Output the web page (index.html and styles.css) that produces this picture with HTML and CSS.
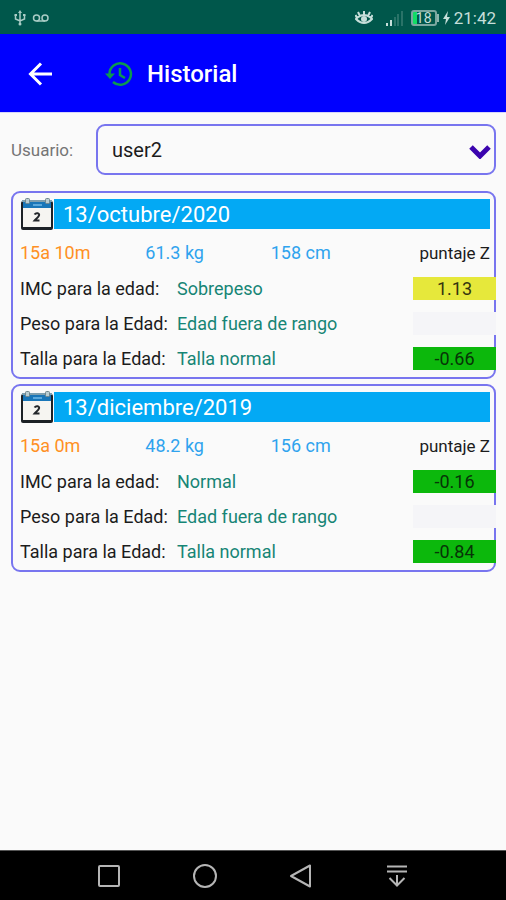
FILE: index.html
```html
<!DOCTYPE html>
<html lang="es">
<head>
<meta charset="utf-8">
<meta name="viewport" content="width=device-width, initial-scale=1">
<title>Historial</title>
<link rel="stylesheet" href="styles.css">
</head>
<body>
<svg class="sprite" aria-hidden="true">
  <symbol id="calendar" viewBox="0 0 34 34">
    <rect x="1" y="4" width="32" height="29" rx="2" fill="#1c2126"/>
    <rect x="3" y="5" width="28" height="7" fill="#1976b8"/>
    <rect x="13" y="7" width="9" height="2" fill="#5ba9dc"/>
    <rect x="3" y="11" width="28" height="19" fill="#f6f5f1"/>
    <path d="M2 4H32" stroke="#7f9fae" stroke-width="2"/>
    <g fill="#b9cdd2" stroke="#71868c"><rect x="5.500" y="1.500" width="4" height="5" rx="1"/><rect x="25.500" y="1.500" width="4" height="5" rx="1"/></g>
    <path d="M14.500 17.500C16 15.500 20 16 19 18.500C18.500 20.500 16 21.500 14.500 23.500H19.500" fill="none" stroke="#22262a" stroke-width="2"/>
  </symbol>
</svg>

<div class="status">
  <svg width="12" height="18" viewBox="0 0 12 18" fill="none" stroke="#a9ccc5" stroke-width="1.500"><path d="M6 3V15M1.500 6V10L6 12L10.500 10V6"/><path d="M6 1L8 4H4ZM0.500 5H3V7H0.500ZM9 5H11.500V7H9Z" fill="#a9ccc5" stroke="none"/><circle cx="6" cy="15" r="1.500" fill="#a9ccc5" stroke="none"/></svg>
  <svg class="voicemail" width="18" height="10" viewBox="0 0 18 10" fill="none" stroke="#a9ccc5" stroke-width="1.500"><circle cx="4.500" cy="5" r="3"/><circle cx="13" cy="5" r="3"/><path d="M4.500 8H13"/></svg>
  <div class="status-right">
    <svg width="18" height="16" viewBox="0 0 18 16" fill="none" stroke="#c6dfda" stroke-width="2"><path d="M1 9Q9 1 17 9Q9 17 1 9ZM9 5V1M5 6L3 2M13 6L15 2M2 8L0.500 5M16 8L17.500 5"/><circle cx="9" cy="9" r="3" fill="#c6dfda" stroke="none"/></svg>
    <svg class="signal" width="17" height="16" viewBox="0 0 17 16"><path d="M0 13H2V16H0ZM4 10H6V16H4Z" fill="#c6dfda"/><path d="M8 7H10V16H8ZM11 4H13V16H11ZM15 1H17V16H15Z" fill="#2a7368"/></svg>
    <span class="battery">18</span>
    <svg class="bolt" width="7" height="14" viewBox="0 0 7 14"><path d="M5 0L0 8H3L2 14L7 6H4Z" fill="#c6dfda"/></svg>
    <span class="clock">21:42</span>
  </div>
</div>

<header class="appbar">
  <button class="back" type="button" aria-label="Volver"><svg width="24" height="24" viewBox="0 0 24 24" fill="none" stroke="#fff" stroke-width="3"><path d="M24 12H3M13 1.500L2.500 12L13 22.500"/></svg></button>
  <svg class="history" width="28" height="26" viewBox="0 0 28 26" fill="none" stroke="#0c9a4e" stroke-width="2.500"><path d="M4.500 13A10.700 10.700 0 1 1 8 21"/><path d="M15 7V14L20 17" stroke-width="2.500"/><path d="M0 12.500H10L5 18Z" fill="#0c9a4e" stroke="none"/></svg>
  <h1>Historial</h1>
</header>

<main>
  <div class="picker">
    <label for="user">Usuario:</label>
    <div class="select">
      <select id="user"><option>user2</option></select>
      <svg class="chevron" width="22" height="14" viewBox="0 0 22 14" fill="none" stroke="#3b04ae" stroke-width="5"><path d="M2 2L11 11L20 2"/></svg>
    </div>
  </div>

  <article class="card">
    <div class="date"><svg width="34" height="34"><use href="#calendar"/></svg><h2>13/octubre/2020</h2></div>
    <div class="stats"><span class="age">15a 10m</span><span>61.3 kg</span><span>158 cm</span><span class="score">puntaje Z</span></div>
    <table>
      <tr><th scope="row">IMC para la edad:</th><td>Sobrepeso</td><td class="z"><span class="chip warn">1.13</span></td></tr>
      <tr><th scope="row">Peso para la Edad:</th><td>Edad fuera de rango</td><td class="z"><span class="chip"></span></td></tr>
      <tr><th scope="row">Talla para la Edad:</th><td>Talla normal</td><td class="z"><span class="chip ok">-0.66</span></td></tr>
    </table>
  </article>

  <article class="card">
    <div class="date"><svg width="34" height="34"><use href="#calendar"/></svg><h2>13/diciembre/2019</h2></div>
    <div class="stats"><span class="age">15a 0m</span><span>48.2 kg</span><span>156 cm</span><span class="score">puntaje Z</span></div>
    <table>
      <tr><th scope="row">IMC para la edad:</th><td>Normal</td><td class="z"><span class="chip ok">-0.16</span></td></tr>
      <tr><th scope="row">Peso para la Edad:</th><td>Edad fuera de rango</td><td class="z"><span class="chip"></span></td></tr>
      <tr><th scope="row">Talla para la Edad:</th><td>Talla normal</td><td class="z"><span class="chip ok">-0.84</span></td></tr>
    </table>
  </article>
</main>

<nav class="navbar">
  <button type="button" aria-label="Recientes"><svg width="24" height="24" viewBox="0 0 24 24"><rect x="2" y="2" width="20" height="20" rx="1"/></svg></button>
  <button type="button" aria-label="Inicio"><svg width="24" height="24" viewBox="0 0 24 24"><circle cx="12" cy="12" r="11"/></svg></button>
  <button type="button" aria-label="Atrás"><svg width="24" height="24" viewBox="0 0 24 24"><path d="M21 1.500V22.500L2 12Z" stroke-linejoin="round"/></svg></button>
  <button type="button" aria-label="Ocultar barra"><svg width="24" height="24" viewBox="0 0 24 24"><path d="M2 2.500H22M2 7.500H22M12 11V21M4.500 14L12 21.500L19.500 14"/></svg></button>
</nav>
</body>
</html>
```
FILE: styles.css
```css
* { box-sizing: border-box; }
body {
  margin: 0;
  min-height: 100vh;
  display: flex;
  flex-direction: column;
  background: #fafafa;
  color: #1c1c1c;
  font-family: Roboto, "Liberation Sans", sans-serif;
  font-size: 18px;
}
h1, h2 { margin: 0; }
button { padding: 0; border: 0; background: none; }
svg { display: block; flex: none; }
.sprite { position: absolute; width: 0; height: 0; }

.status {
  display: flex;
  align-items: center;
  height: 34px;
  padding: 2px 10px 0 14px;
  background: #00574b;
  color: #c6dfda;
}
.voicemail { margin-left: 6px; }
.status-right { display: flex; align-items: center; margin-left: auto; }
.signal { margin: 0 8px 0 13px; }
.battery {
  position: relative;
  width: 26px;
  height: 16px;
  border: 2px solid #7ba79f;
  border-radius: 3px;
  background: linear-gradient(90deg, #12dc65 4px, transparent 4px);
  font-size: 14px;
  line-height: 13px;
  text-align: center;
}
.battery::after {
  content: "";
  position: absolute;
  right: -4px;
  top: 2px;
  width: 2px;
  height: 8px;
  background: #8fb5ad;
}
.bolt { margin: 0 4px 0 6px; }
.clock { font-size: 17px; line-height: 20px; }

.appbar {
  display: flex;
  align-items: center;
  height: 79px;
  padding: 2px 28px 0;
  border-bottom: 1px solid #d5d5fb;
  background: #0000ff;
  color: #fff;
}
.history { margin: 0 14px 0 53px; }
h1 { font-size: 24px; line-height: 32px; font-weight: 500; }

main { flex: 1; padding: 11px 10px 0 11px; }
.picker { display: flex; align-items: center; margin-bottom: 16px; }
label { width: 85px; flex: none; color: #757575; font-size: 17px; }
.select { position: relative; flex: 1; }
select {
  display: block;
  width: 100%;
  height: 51px;
  padding: 0 40px 0 14px;
  border: 2px solid #7875ef;
  border-radius: 9px;
  background: #fafafa;
  color: #1c1c1c;
  font: inherit;
  font-size: 20px;
  appearance: none;
}
.chevron { position: absolute; right: 5px; top: 21px; pointer-events: none; }

.card {
  margin-bottom: 5px;
  padding: 4px 4px 1px 7px;
  border: 2px solid #7875ef;
  border-radius: 9px;
}
.date { display: flex; align-items: center; height: 34px; }
.date h2 {
  flex: 1;
  height: 30px;
  padding-left: 9px;
  background: #03a9f4;
  color: #fff;
  font-size: 22px;
  line-height: 31px;
  font-weight: 400;
}
.stats {
  display: grid;
  grid-template-columns: 4fr 4fr 4fr 3fr;
  height: 40px;
  line-height: 44px;
  color: #2fa3ee;
}
.stats .age { color: #ff9023; }
.stats .score { color: #1c1c1c; font-size: 17px; text-align: right; white-space: nowrap; }

table { width: calc(100% + 6px); border-collapse: collapse; table-layout: fixed; }
th, td { height: 35px; padding: 0; font-weight: 400; text-align: left; white-space: nowrap; }
th { width: 157px; }
td { color: #168575; }
.z { width: 83px; }
.chip {
  position: relative;
  display: block;
  height: 23px;
  background: #f5f5f8;
  color: #1c1c1c;
  line-height: 24px;
  text-align: center;
}
.warn { background: #e6e83b; color: #35350f; }
.ok { background: #0cb80c; color: #073407; }

.navbar {
  display: flex;
  justify-content: space-between;
  height: 50px;
  padding: 0 97px;
  border-top: 1px solid #555;
  background: #000;
}
.navbar svg { fill: none; stroke: #b5b5b5; stroke-width: 2; }
```
